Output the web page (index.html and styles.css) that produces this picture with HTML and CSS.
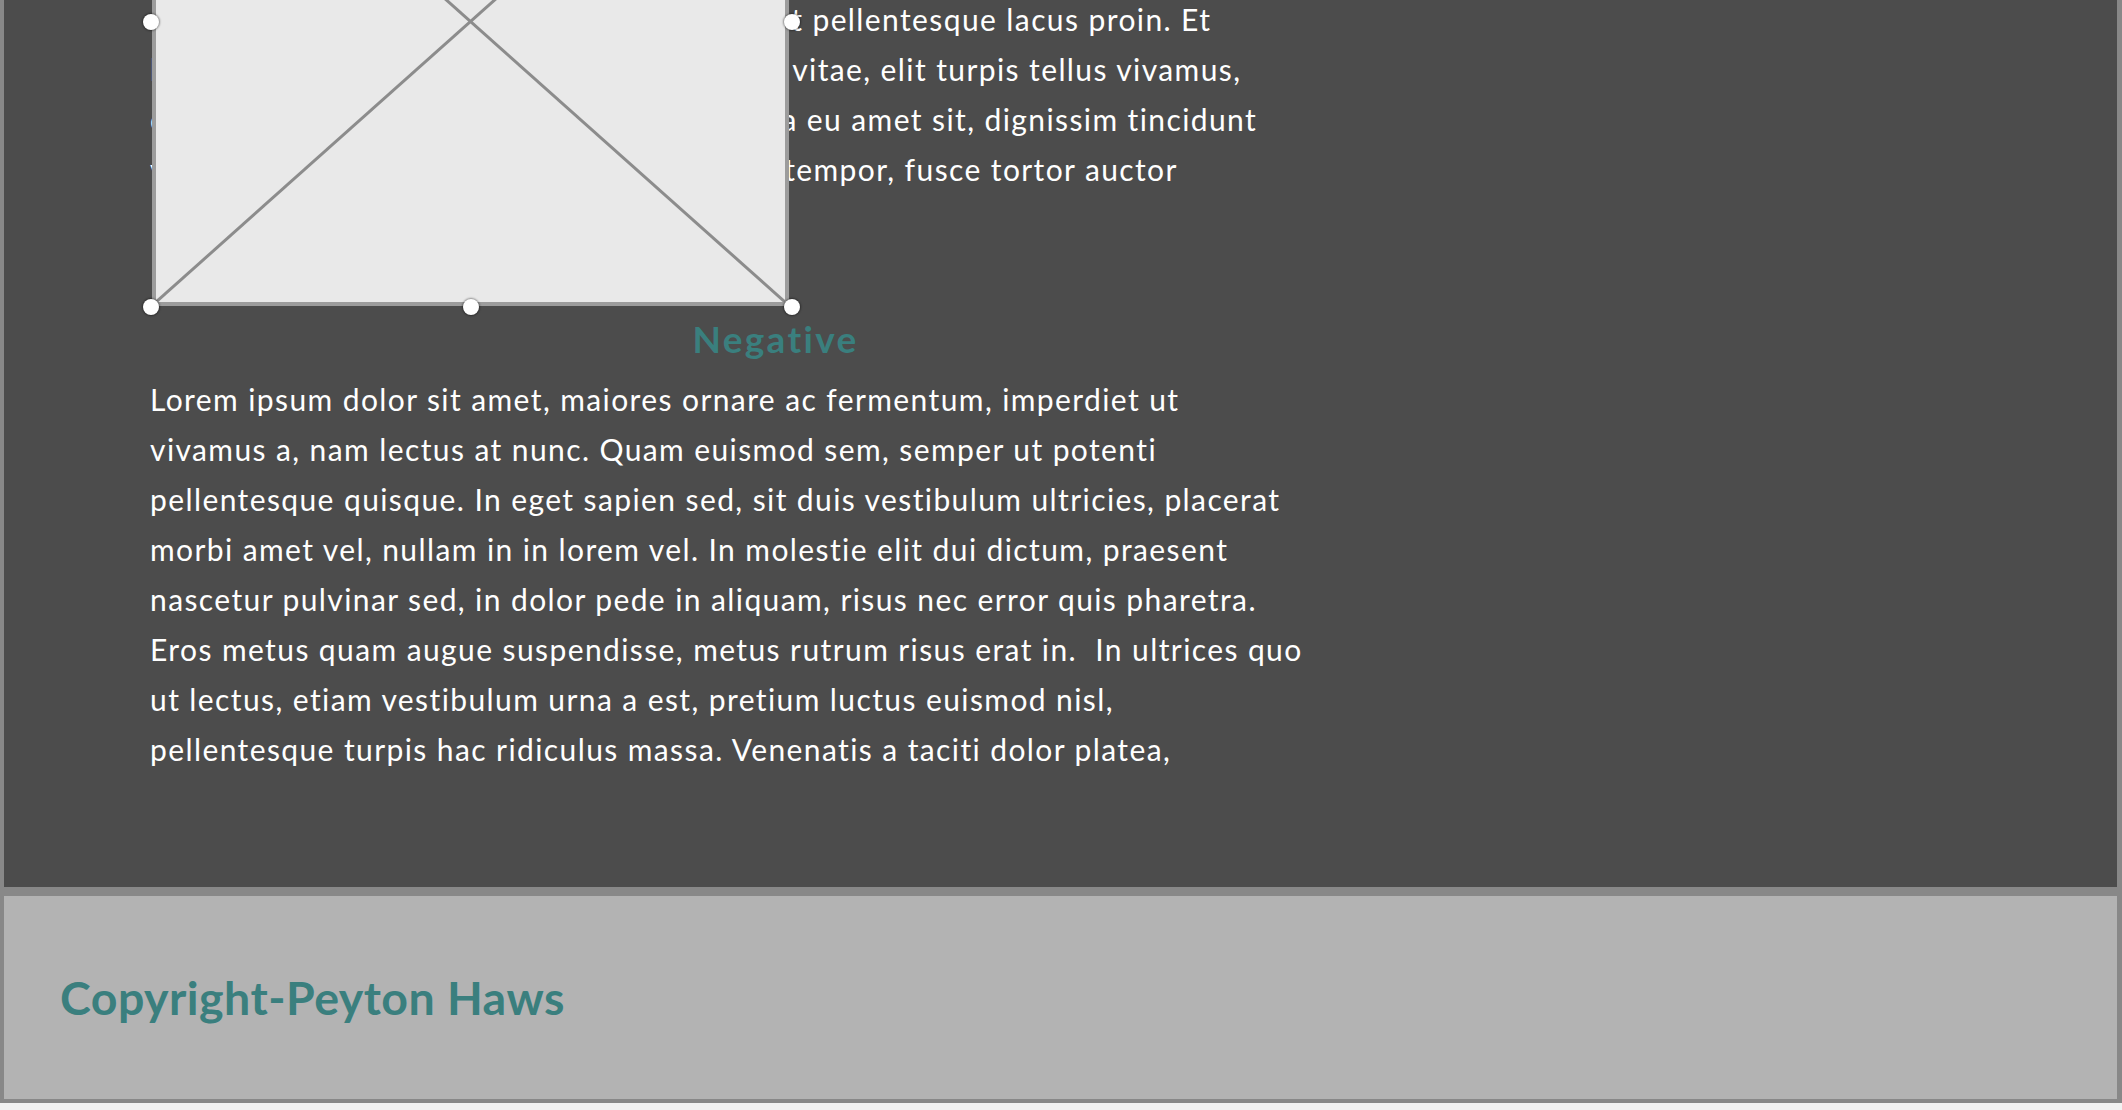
FILE: index.html
```html
<!DOCTYPE html>
<html lang="en">
<head>
<meta charset="utf-8">
<title>Negative</title>
<link rel="stylesheet" href="styles.css">
</head>
<body>
<div class="page">
  <main class="main">
    <div class="content">
      <p class="para">Lorem ipsum dolor sit erat, suspendisse, et at pellentesque lacus proin. Et<br>
      ligula nula pretium risus tempor fermentum, vitae, elit turpis tellus vivamus,<br>
      congue wisi enim ultricies sit magna sapien a eu amet sit, dignissim tincidunt<br>
      vel eu libero cras faucibus, arcu elementum tempor, fusce tortor auctor</p>
      <h2 class="heading">Negative</h2>
      <p class="para">Lorem ipsum dolor sit amet, maiores ornare ac fermentum, imperdiet ut<br>
      vivamus a, nam lectus at nunc. Quam euismod sem, semper ut potenti<br>
      pellentesque quisque. In eget sapien sed, sit duis vestibulum ultricies, placerat<br>
      morbi amet vel, nullam in in lorem vel. In molestie elit dui dictum, praesent<br>
      nascetur pulvinar sed, in dolor pede in aliquam, risus nec error quis pharetra.<br>
      Eros metus quam augue suspendisse, metus rutrum risus erat in.&nbsp; In ultrices quo<br>
      ut lectus, etiam vestibulum urna a est, pretium luctus euismod nisl,<br>
      pellentesque turpis hac ridiculus massa. Venenatis a taciti dolor platea,</p>
    </div>
    <div class="placeholder">
      <div class="ph-img">
        <svg class="ph-x" viewBox="0 0 100 100" preserveAspectRatio="none">
          <line x1="0" y1="0" x2="100" y2="100"/>
          <line x1="0" y1="100" x2="100" y2="0"/>
        </svg>
      </div>
      <span class="handle h-tl"></span>
      <span class="handle h-tm"></span>
      <span class="handle h-tr"></span>
      <span class="handle h-ml"></span>
      <span class="handle h-mr"></span>
      <span class="handle h-bl"></span>
      <span class="handle h-bm"></span>
      <span class="handle h-br"></span>
    </div>
  </main>
  <footer class="footer">
    <h1 class="copyright">Copyright-Peyton Haws</h1>
  </footer>
</div>
</body>
</html>
```

FILE: styles.css
```css
html, body {
  margin: 0;
  padding: 0;
}
body {
  background: #f2f2f2;
  font-family: Lato, "Noto Sans", "DejaVu Sans", sans-serif;
  font-variant-ligatures: none;
}
.page {
  width: 2122px;
}
.main {
  position: relative;
  display: flow-root;
  background: #4c4c4c;
  border-style: solid;
  border-color: #888888;
  border-width: 0 5px 4px 4px;
  padding: 0 0 113px 146px;
}
.content {
  width: 1251px;
  margin-top: -6px;
}
.para {
  margin: 0;
  color: #ffffff;
  font-size: 30px;
  line-height: 50px;
  letter-spacing: 1.4px;
}
.heading {
  margin: 123px 0 13px;
  font-size: 37px;
  line-height: 44px;
  font-weight: 700;
  letter-spacing: 2.3px;
  color: #3a7f7e;
  text-align: center;
}
.placeholder {
  position: absolute;
  left: 146.7px;
  top: -263px;
  width: 641px;
  height: 570px;
}
.ph-img {
  position: absolute;
  top: 0;
  left: 1px;
  right: 3px;
  bottom: 1px;
  background: #e9e9e9;
  border: 4px solid #9c9c9c;
}
.ph-x {
  display: block;
  width: 100%;
  height: 100%;
}
.ph-x line {
  stroke: #8c8c8c;
  stroke-width: 3px;
  vector-effect: non-scaling-stroke;
}
.handle {
  position: absolute;
  width: 16px;
  height: 16px;
  border-radius: 50%;
  background: #ffffff;
  box-shadow: 0 0 2px 1px rgba(0, 0, 0, 0.4);
}
.h-tl, .h-tm, .h-tr { top: -8px; }
.h-bl, .h-bm, .h-br { bottom: -8px; }
.h-ml, .h-mr { top: calc(50% - 8px); }
.h-tl, .h-ml, .h-bl { left: -8px; }
.h-tr, .h-mr, .h-br { right: -8px; }
.h-tm, .h-bm { left: calc(50% - 8px); }
.footer {
  display: flex;
  align-items: center;
  height: 203px;
  background: #b3b3b3;
  border-style: solid;
  border-color: #888888;
  border-width: 5px 5px 4px 4px;
  padding-left: 56px;
}
.copyright {
  margin: 0;
  font-size: 46.5px;
  line-height: 55px;
  font-weight: 700;
  letter-spacing: 0.45px;
  color: #3a7f7e;
}
```
